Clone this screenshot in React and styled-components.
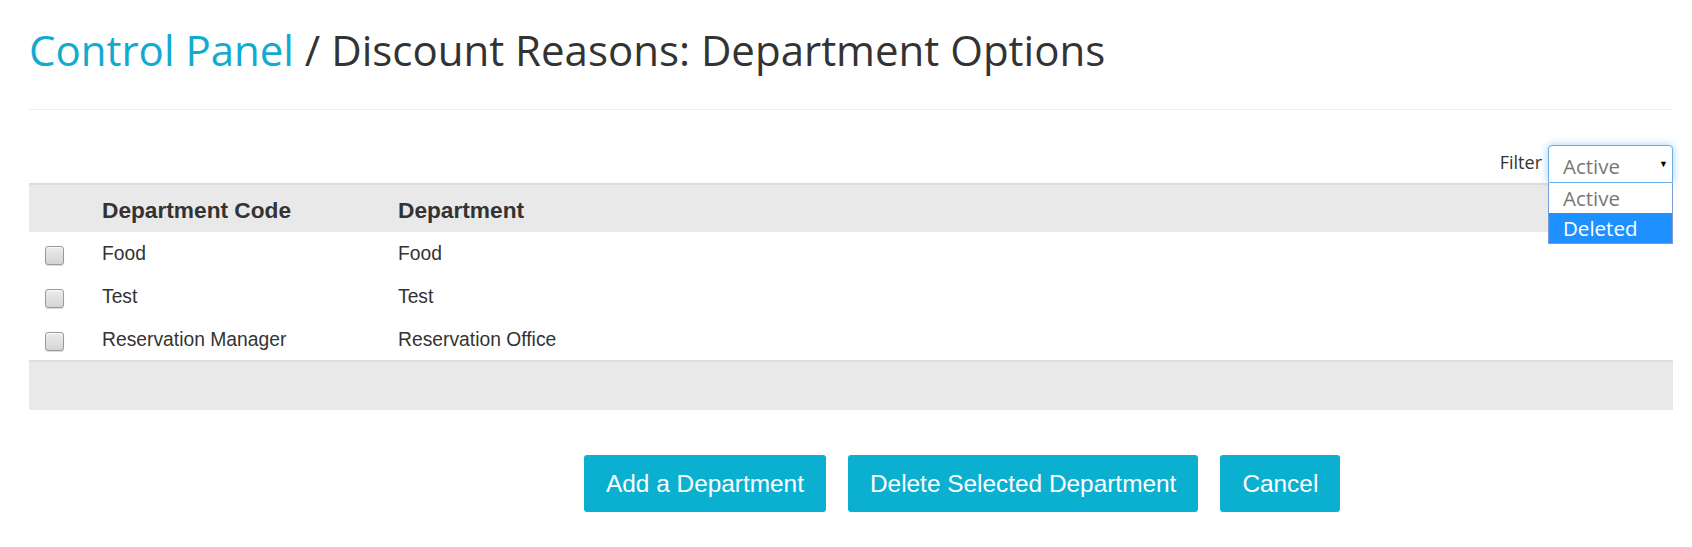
import React, { useState } from "react";
import styled, { createGlobalStyle } from "styled-components";

const GlobalStyle = createGlobalStyle`
  body {
    margin: 0;
    background: #fff;
    font-family: Arial, "Liberation Sans", sans-serif;
    color: #333;
  }
`;

const departments = [
  { code: "Food", name: "Food" },
  { code: "Test", name: "Test" },
  { code: "Reservation Manager", name: "Reservation Office" },
];

const filterOptions = ["Active", "Deleted"];

const App = () => {
  const [filter, setFilter] = useState("Active");
  const [highlighted, setHighlighted] = useState("Deleted");

  return (
    <Page>
      <GlobalStyle />
      <Title>
        <TitleLink href="#">Control Panel</TitleLink> / Discount Reasons:
        Department Options
      </Title>
      <Divider />
      <FilterBar>
        <FilterLabel>Filter</FilterLabel>
        <SelectWrap>
          <SelectBox>
            {filter}
            <Caret>▼</Caret>
          </SelectBox>
          <OptionList>
            {filterOptions.map((opt) => (
              <Option
                key={opt}
                isActive={opt === highlighted}
                onMouseEnter={() => setHighlighted(opt)}
                onClick={() => setFilter(opt)}
              >
                {opt}
              </Option>
            ))}
          </OptionList>
        </SelectWrap>
      </FilterBar>
      <Table>
        <thead>
          <HeadRow>
            <CheckCell />
            <HeadCell width="280px">Department Code</HeadCell>
            <HeadCell>Department</HeadCell>
          </HeadRow>
        </thead>
        <tbody>
          {departments.map((d) => (
            <BodyRow key={d.code}>
              <CheckCell>
                <Checkbox />
              </CheckCell>
              <Cell>{d.code}</Cell>
              <Cell>{d.name}</Cell>
            </BodyRow>
          ))}
        </tbody>
        <tfoot>
          <FootRow>
            <td colSpan={3} />
          </FootRow>
        </tfoot>
      </Table>
      <ButtonBar>
        <Button>Add a Department</Button>
        <Button>Delete Selected Department</Button>
        <Button>Cancel</Button>
      </ButtonBar>
    </Page>
  );
};

export default App;

const Page = styled.div`
  padding: 0 19px 0 29px;
  height: 547px;
  box-sizing: border-box;
  overflow: hidden;
`;

const Title = styled.h1`
  margin: 25px 0 0;
  font-family: "Open Sans", sans-serif;
  font-weight: 400;
  font-size: 42px;
  line-height: 50px;
  color: #333;
`;

const TitleLink = styled.a`
  color: #12abcf;
  text-decoration: none;
`;

const Divider = styled.hr`
  margin: 34px 0 0;
  border: 0;
  border-top: 1px solid #eee;
`;

const FilterBar = styled.div`
  display: flex;
  justify-content: flex-end;
  align-items: center;
  gap: 6px;
  margin-top: 35px;
  font-family: "Open Sans", sans-serif;
`;

const FilterLabel = styled.span`
  font-size: 18px;
  color: #333;
  margin-top: -4px;
`;

const SelectWrap = styled.div`
  position: relative;
  width: 125px;
`;

const SelectBox = styled.div`
  display: flex;
  align-items: center;
  height: 38px;
  box-sizing: border-box;
  padding: 4px 0 0 14px;
  border: 1px solid #66afe9;
  border-radius: 4px 4px 0 0;
  box-shadow: 0 0 8px rgba(102, 175, 233, 0.6);
  font-size: 20.5px;
  color: #777;
  background: #fff;
`;

const Caret = styled.span`
  position: absolute;
  right: 5px;
  top: 12px;
  font-size: 9px;
  color: #000;
`;

const OptionList = styled.div`
  position: absolute;
  top: 100%;
  left: 0;
  right: 0;
  z-index: 2;
  background: #fff;
  border: 1px solid #7a9cd6;
  border-top: 0;
`;

const Option = styled.div`
  height: 30px;
  line-height: 30px;
  padding-left: 14px;
  font-size: 20.5px;
  color: ${(props) => (props.isActive ? "#fff" : "#777")};
  background: ${(props) => (props.isActive ? "#1e90ff" : "#fff")};
  cursor: default;
`;

const Table = styled.table`
  width: 100%;
  border-collapse: collapse;
  table-layout: fixed;
`;

const HeadRow = styled.tr`
  background: #e9e9e9;
  border-top: 2px solid #dcdcdc;
  height: 48px;
`;

const HeadCell = styled.th`
  width: ${(props) => props.width || "auto"};
  padding: 4px 8px 0;
  text-align: left;
  font-size: 22.7px;
  font-weight: 700;
  color: #333;
`;

const BodyRow = styled.tr`
  height: 43px;
`;

const CheckCell = styled.td`
  width: 49px;
  padding: 0 0 0 16px;
  vertical-align: middle;
`;

const Cell = styled.td`
  padding: 1px 8px 0;
  font-size: 19.3px;
  color: #333;
`;

const Checkbox = styled.span`
  display: block;
  width: 17px;
  height: 17px;
  margin-top: 4px;
  border: 1px solid #9a9a9a;
  border-radius: 3px;
  background: linear-gradient(#ececec, #d4d4d4);
  box-shadow: 0 1px 1px rgba(0, 0, 0, 0.15), inset 0 1px 0 #fafafa;
`;

const FootRow = styled.tr`
  background: #e9e9e9;
  border-top: 2px solid #dcdcdc;
  height: 49px;
`;

const ButtonBar = styled.div`
  display: flex;
  gap: 22px;
  margin-top: 45px;
  padding-left: 555px;
`;

const Button = styled.button`
  height: 57px;
  padding: 0 22px;
  border: 0;
  border-radius: 3px;
  background: #0bb0d1;
  color: #fff;
  font-family: Arial, "Liberation Sans", sans-serif;
  font-size: 24.4px;
  cursor: pointer;
`;
